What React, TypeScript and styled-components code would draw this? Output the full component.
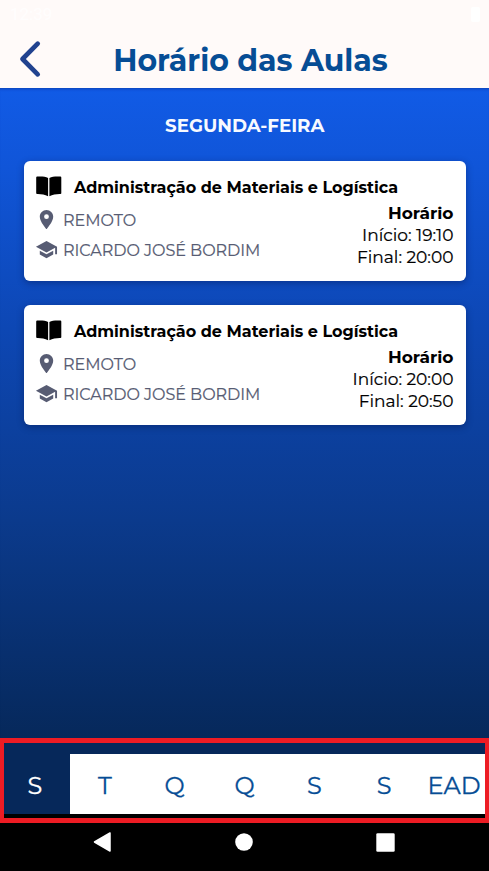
import React from "react";
import styled, { createGlobalStyle } from "styled-components";
import { MdLocationOn, MdSchool } from "react-icons/md";

const GlobalStyle = createGlobalStyle`
  * { box-sizing: border-box; }
  body {
    margin: 0;
    font-family: Montserrat, Inter, sans-serif;
    overflow: hidden;
  }
`;

const Screen = styled.div`
  position: relative;
  display: flex;
  flex-direction: column;
  width: 489px;
  height: 871px;
  overflow: hidden;
  background: #000;
`;

const StatusBar = styled.div`
  display: flex;
  align-items: center;
  justify-content: space-between;
  height: 30px;
  padding: 0 9px 2px 10px;
  color: rgba(255, 255, 255, 0.8);
  background: #fffaf9;
  font: 400 17px Roboto, sans-serif;
`;

const Battery = styled.span`
  width: 9px;
  height: 15px;
  border-radius: 2px;
  background: #fff;
`;

const Header = styled.header`
  display: grid;
  grid-template-columns: 60px 1fr 48px;
  align-items: center;
  height: 58px;
  background: #fffaf9;
`;

const BackButton = styled.button`
  display: flex;
  padding: 0 0 0 18px;
  border: 0;
  background: none;
`;

const Title = styled.h1`
  margin: 3px 0 0;
  color: #064d95;
  font-size: 30px;
  line-height: 40px;
  font-weight: 700;
  text-align: center;
`;

const Content = styled.main`
  display: flex;
  flex-direction: column;
  gap: 24px;
  height: 666px;
  padding: 24.5px 23.5px 0 24px;
  background: linear-gradient(#115be6 0%, #1055d8 12%, #0d47b4 36%, #0b3a8c 65%, #06285a 98%);
  box-shadow: inset 0 3px 3px -2px rgba(0, 20, 90, 0.35);
`;

const DayName = styled.h2`
  margin: 0;
  padding-top: 1px;
  color: #f7faff;
  font-size: 18.2px;
  line-height: 24px;
  height: 24px;
  font-weight: 700;
  text-align: center;
`;

const Card = styled.article`
  display: flex;
  flex-direction: column;
  height: 120px;
  padding: 15px 12px 0;
  border-radius: 6px;
  background: #fff;
  color: #000;
  box-shadow: 0 2px 7px rgba(0, 15, 60, 0.38);
`;

const Subject = styled.h3`
  display: flex;
  align-items: center;
  gap: 12.5px;
  height: 24px;
  margin: 0;
  font-size: 16px;
  line-height: 24px;
  font-weight: 700;
  white-space: nowrap;

  svg { flex: none; margin-top: -3px; }
`;

const Details = styled.div`
  display: flex;
  justify-content: space-between;
`;

const Facts = styled.div`
  display: flex;
  flex-direction: column;
  padding-top: 5.5px;
  color: #575c73;
`;

const Fact = styled.div`
  display: flex;
  align-items: center;
  gap: 5px;
  height: 30px;
  font-size: 16px;
  line-height: 22px;
  letter-spacing: -0.03px;
  -webkit-text-stroke: 0.2px currentColor;

  span { padding-top: 1px; }
  svg { flex: none; margin-left: -1px; margin-top: -1px; }
`;

const Times = styled.div`
  display: flex;
  flex-direction: column;
  align-items: flex-end;
  padding-top: 2.5px;
  font-size: 17px;
  line-height: 22.2px;

  span { -webkit-text-stroke: 0.2px currentColor; }
`;

const TimesTitle = styled.strong`
  font-weight: 700;
`;

const Tabs = styled.nav`
  display: grid;
  grid-template-columns: repeat(7, 1fr);
  height: 60px;
  background: #fff;
`;

const Tab = styled.button<{ $active?: boolean }>`
  padding: 3px 0 0;
  border: 0;
  font-family: inherit;
  font-size: 24px;
  line-height: 30px;
  -webkit-text-stroke: 0.3px currentColor;
  color: ${(p) => (p.$active ? "#fff" : "#064d95")};
  background: ${(p) => (p.$active ? "#06285a" : "#fff")};
`;

const Highlight = styled.div`
  position: absolute;
  top: 738px;
  left: 0;
  width: 489px;
  height: 85px;
  border: 5px solid #ed1c24;
  border-left-width: 4px;
  border-right-width: 4px;
  pointer-events: none;
`;

const SystemNav = styled.footer`
  display: flex;
  flex: 1;
  align-items: center;
  justify-content: space-between;
  padding: 0 94px 1px 92px;
  background: #000;
`;

const BookIcon = () => (
  <svg width="25.5" height="21" viewBox="0 0 25.5 21" fill="#000">
    <path d="M12.1 1.9C9.5 .5 5.5 .2 1.2 .5Q.2 .6 .2 1.5V17.2Q.2 18 1.2 18C5 17.9 8.8 18.6 12.1 20.3Z" />
    <path d="M13.4 1.9C16 .5 20 .2 24.3 .5Q25.3 .6 25.3 1.5V17.2Q25.3 18 24.3 18C20.5 17.9 16.7 18.6 13.4 20.3Z" />
  </svg>
);

const classes = [
  { subject: "Administração de Materiais e Logística", room: "REMOTO", teacher: "RICARDO JOSÉ BORDIM", start: "19:10", end: "20:00" },
  { subject: "Administração de Materiais e Logística", room: "REMOTO", teacher: "RICARDO JOSÉ BORDIM", start: "20:00", end: "20:50" },
];

const days = ["S", "T", "Q", "Q", "S", "S", "EAD"];

export default function App() {
  return (
    <Screen>
      <GlobalStyle />
      <StatusBar>
        <span>12:39</span>
        <Battery />
      </StatusBar>
      <Header>
        <BackButton aria-label="Voltar">
          <svg width="24" height="38" viewBox="0 0 24 38" fill="none">
            <path d="M19.7 3.7 4.5 19l15.2 15.3" stroke="#21428f" strokeWidth="4.7" strokeLinecap="round" strokeLinejoin="round" />
          </svg>
        </BackButton>
        <Title>Horário das Aulas</Title>
      </Header>
      <Content>
        <DayName>SEGUNDA-FEIRA</DayName>
        {classes.map((c) => (
          <Card key={c.start}>
            <Subject>
              <BookIcon />
              {c.subject}
            </Subject>
            <Details>
              <Facts>
                <Fact><MdLocationOn size={23} /><span>{c.room}</span></Fact>
                <Fact><MdSchool size={23} /><span>{c.teacher}</span></Fact>
              </Facts>
              <Times>
                <TimesTitle>Horário</TimesTitle>
                <span>Início: {c.start}</span>
                <span>Final: {c.end}</span>
              </Times>
            </Details>
          </Card>
        ))}
      </Content>
      <Tabs>
        {days.map((d, i) => (
          <Tab key={i} $active={i === 0}>{d}</Tab>
        ))}
      </Tabs>
      <SystemNav>
        <svg width="20" height="22" viewBox="0 0 20 22"><path d="M18 2v18L2.5 11Z" fill="#fff" stroke="#fff" strokeWidth="1.5" strokeLinejoin="round" /></svg>
        <svg width="18" height="18" viewBox="0 0 18 18"><circle cx="9" cy="9" r="8.8" fill="#fff" /></svg>
        <svg width="19" height="19" viewBox="0 0 19 19"><rect x=".3" y=".3" width="18.4" height="18.4" rx="1.3" fill="#fff" /></svg>
      </SystemNav>
      <Highlight />
    </Screen>
  );
}
